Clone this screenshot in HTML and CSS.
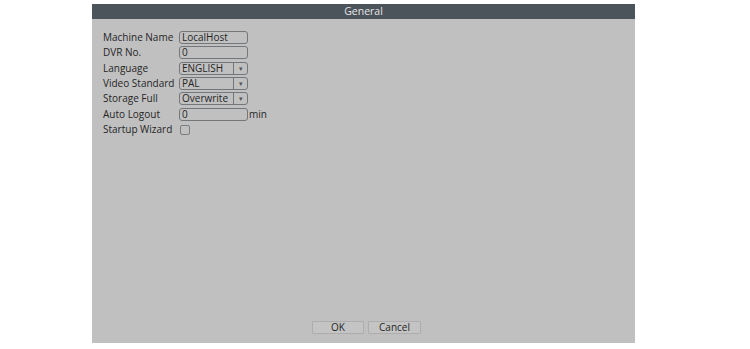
FILE: index.html
```html
<!DOCTYPE html>
<html>
<head>
<meta charset="utf-8">
<link rel="stylesheet" href="styles.css">
</head>
<body>
<div class="panel">
  <div class="title">General</div>
  <div class="form">
    <div class="label">Machine Name</div>
    <div class="field"><div class="box">LocalHost</div></div>
    <div class="label">DVR No.</div>
    <div class="field"><div class="box">0</div></div>
    <div class="label">Language</div>
    <div class="field"><div class="box sel"><span class="val">ENGLISH</span><span class="arrow">▾</span></div></div>
    <div class="label">Video Standard</div>
    <div class="field"><div class="box sel"><span class="val">PAL</span><span class="arrow">▾</span></div></div>
    <div class="label">Storage Full</div>
    <div class="field"><div class="box sel"><span class="val">Overwrite</span><span class="arrow">▾</span></div></div>
    <div class="label">Auto Logout</div>
    <div class="field"><div class="box">0</div><span class="unit">min</span></div>
    <div class="label">Startup Wizard</div>
    <div class="field"><div class="check"></div></div>
  </div>
  <div class="buttons">
    <div class="btn ok">OK</div>
    <div class="btn cancel">Cancel</div>
  </div>
</div>
</body>
</html>
```

FILE: styles.css
```css
html, body {
  margin: 0;
  padding: 0;
  background: #ffffff;
}
body {
  font-family: "Open Sans", "Noto Sans", sans-serif;
  font-size: 10px;
  color: #262626;
}
.panel {
  margin: 4px 0 0 92px;
  width: 543px;
  height: 339px;
  background: #c0c0c0;
  display: flex;
  flex-direction: column;
}
.title {
  height: 15px;
  background: #4b535b;
  color: #e6e6e6;
  font-size: 10.5px;
  line-height: 15px;
  text-align: center;
}
.form {
  margin-top: 11px;
  padding-left: 11px;
  display: grid;
  grid-template-columns: 76px auto;
  grid-auto-rows: 15.33px;
  align-items: center;
}
.label {
  line-height: 13px;
  white-space: nowrap;
}
.field {
  display: flex;
  align-items: center;
}
.box {
  box-sizing: border-box;
  width: 69px;
  height: 13px;
  border: 1px solid #74777a;
  border-radius: 3px;
  padding-left: 2px;
  line-height: 11px;
  display: flex;
  align-items: center;
}
.val {
  flex: 1;
}
.arrow {
  width: 13px;
  height: 11px;
  border-left: 1px solid #74777a;
  font-size: 7px;
  line-height: 11px;
  text-align: center;
  color: #555;
}
.unit {
  margin-left: 1px;
}
.check {
  box-sizing: border-box;
  width: 10px;
  height: 10px;
  margin-left: 1px;
  border: 1px solid #7a7d80;
  border-radius: 2px;
}
.buttons {
  margin-top: auto;
  margin-bottom: 9px;
  display: flex;
  gap: 4px;
  padding-left: 220px;
}
.btn {
  box-sizing: border-box;
  height: 13px;
  border: 1px solid #adadad;
  background: #c4c4c4;
  border-radius: 1px;
  text-align: center;
  line-height: 11px;
}
.ok { width: 52px; }
.cancel { width: 53px; }
```
